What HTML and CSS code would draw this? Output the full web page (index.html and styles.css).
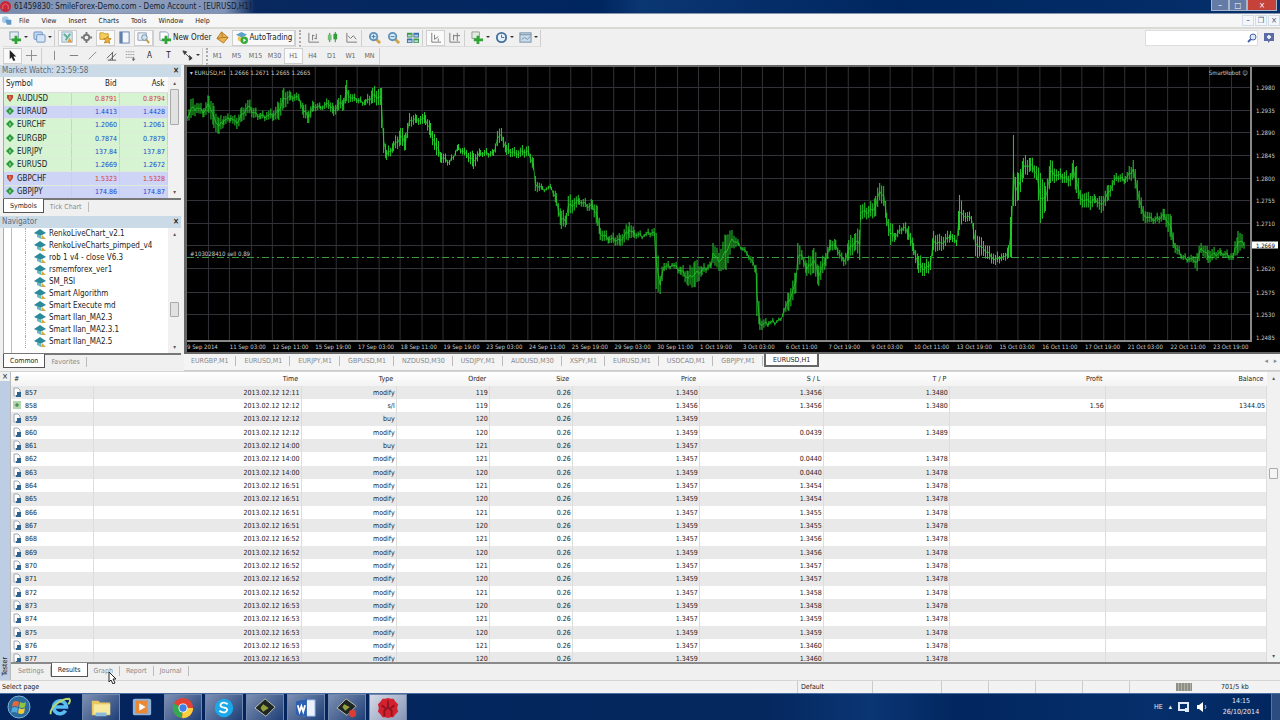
FILE: index.html
```html
<!DOCTYPE html>
<html lang="en">
<head>
    <meta charset="UTF-8">
    <meta name="viewport" content="width=device-width, initial-scale=1.0">
    <title>SmileForex - Demo Account</title>
    <link rel="stylesheet" href="styles.css">
</head>

<body>
    <svg class="sprite" aria-hidden="true">
        <symbol id="i-newchart" viewBox="0 0 14 14"><rect x="1" y="1" width="9" height="8" fill="#e4edf5" stroke="#7d98ae"/><path d="M6 5h3v3h4v3H9v3H6v-3H3V8h3z" fill="#2fa336"/></symbol>
        <symbol id="i-profiles" viewBox="0 0 14 14"><rect x="1" y="1" width="9" height="8" rx="1" fill="#bcd4ee" stroke="#6b93bf"/><rect x="4" y="4" width="9" height="8" rx="1" fill="#d5e5f6" stroke="#6b93bf"/></symbol>
        <symbol id="i-watch" viewBox="0 0 14 14"><rect x="1" y="1" width="11" height="11" fill="#d9e8f2" stroke="#93adbf"/><path d="M3 3l4 4M5 10l5-7" stroke="#5fae92" stroke-width="2"/><path d="M9 7l3 5H7z" fill="#e79a3b"/></symbol>
        <symbol id="i-data" viewBox="0 0 14 14"><circle cx="7" cy="7" r="3" fill="none" stroke="#777" stroke-width="2"/><path d="M7 1v3M7 10v3M1 7h3M10 7h3" stroke="#777" stroke-width="2"/></symbol>
        <symbol id="i-nav" viewBox="0 0 14 14"><path d="M1 2h4l1 1h4v6H1z" fill="#f5cf5e" stroke="#c79a2a"/><path d="M9 6l1 2 3 .3-2 2 .5 3L9 12l-3 1 1-3-2-2 3-.2z" fill="#efb13b" stroke="#bd8623"/></symbol>
        <symbol id="i-terminal" viewBox="0 0 14 14"><rect x="2" y="1" width="10" height="12" fill="#f3f7fc" stroke="#6280ae"/><path d="M2 1h3v12H2z" fill="#6280ae"/></symbol>
        <symbol id="i-tester" viewBox="0 0 14 14"><path d="M1 2h9v8H1z" fill="#e8eef4" stroke="#8fa2b5"/><circle cx="8" cy="7" r="3" fill="#cfe2f3" stroke="#6f8ca6"/><path d="M10 9l3 4" stroke="#c49b46" stroke-width="2"/></symbol>
        <symbol id="i-order" viewBox="0 0 14 14"><path d="M1 1h7l2 2v7H1z" fill="#fff" stroke="#8b9eb1"/><path d="M6 5h3v3h4v3H9v3H6v-3H3V8h3z" fill="#2fa336"/></symbol>
        <symbol id="i-editor" viewBox="0 0 14 14"><path d="M6 1l7 6-5 6-7-5z" fill="#eab24d" stroke="#b0792a"/><path d="M6 1l1 6 6 0M7 7l-6 1" fill="none" stroke="#b0792a"/></symbol>
        <symbol id="i-auto" viewBox="0 0 14 14"><path d="M1 4l6-3 6 3-6 3z" fill="#5ea0c8"/><path d="M3 6v4l4 2V7z" fill="#efc35b"/><circle cx="10" cy="10" r="4" fill="#35ab3c"/><path d="M9 8l3 2-3 2z" fill="#fff"/></symbol>
        <symbol id="i-bars" viewBox="0 0 14 14"><path d="M2 2v10h11M6 4v6M6 5h2M10 3v6M8 8h2" fill="none" stroke="#777"/></symbol>
        <symbol id="i-candles" viewBox="0 0 14 14"><path d="M4 2v10M10 1v11" stroke="#3d7a42"/><rect x="2" y="4" width="4" height="6" fill="#74bd78"/><rect x="8" y="3" width="4" height="6" fill="#2f9e38"/></symbol>
        <symbol id="i-line" viewBox="0 0 14 14"><path d="M2 2v10h11M3 5l3 3 3-3 3 4" fill="none" stroke="#777"/></symbol>
        <symbol id="i-zoomin" viewBox="0 0 14 14"><path d="M8 8l5 5" stroke="#d0a24a" stroke-width="3"/><circle cx="6" cy="6" r="4" fill="#d5e9f7" stroke="#5f93bb" stroke-width="2"/><path d="M4 6h4M6 4v4" stroke="#40759e"/></symbol>
        <symbol id="i-zoomout" viewBox="0 0 14 14"><path d="M8 8l5 5" stroke="#d0a24a" stroke-width="3"/><circle cx="6" cy="6" r="4" fill="#d5e9f7" stroke="#5f93bb" stroke-width="2"/><path d="M4 6h4" stroke="#40759e"/></symbol>
        <symbol id="i-tile" viewBox="0 0 14 14"><path d="M1 2h6v5H1zM8 8h6v5H8z" fill="#3f9c49"/><path d="M8 2h6v5H8zM1 8h6v5H1z" fill="#3d6fae"/><path d="M2 4h4v2H2zM9 4h4v2H9zM2 10h4v2H2zM9 10h4v2H9z" fill="#b9d5df"/></symbol>
        <symbol id="i-scroll" viewBox="0 0 14 14"><path d="M3 2v10h10M6 4v5M6 9l4-3M10 8v3" fill="none" stroke="#777"/></symbol>
        <symbol id="i-shift" viewBox="0 0 14 14"><path d="M2 2v10h11M6 4v6M10 2v9M6 5h7" fill="none" stroke="#777"/></symbol>
        <symbol id="i-indicators" viewBox="0 0 14 14"><path d="M1 1h8v7H1z" fill="#e4ebe4" stroke="#8c9c8c"/><path d="M6 5h3v3h4v3H9v3H6v-3H3V8h3z" fill="#2fa336"/></symbol>
        <symbol id="i-clock" viewBox="0 0 14 14"><circle cx="7" cy="7" r="5" fill="#e6f1fa" stroke="#44719c" stroke-width="2"/><path d="M7 4v3h3" fill="none" stroke="#44719c"/></symbol>
        <symbol id="i-template" viewBox="0 0 14 14"><rect x="1" y="2" width="12" height="10" fill="#c9dbea" stroke="#728ca3"/><path d="M1 4h12" stroke="#728ca3"/><path d="M3 9l3-2 3 2 3-3" fill="none" stroke="#728ca3"/></symbol>
        <symbol id="i-cursor" viewBox="0 0 14 14"><path d="M4 1v10l2-2 2 4 2-1-2-4h3z" fill="#222"/></symbol>
        <symbol id="i-cross" viewBox="0 0 14 14"><path d="M7 1v12M1 7h12" stroke="#888"/></symbol>
        <symbol id="i-vline" viewBox="0 0 14 14"><path d="M7 2v10" stroke="#888"/></symbol>
        <symbol id="i-hline" viewBox="0 0 14 14"><path d="M3 7h9" stroke="#777"/></symbol>
        <symbol id="i-trend" viewBox="0 0 14 14"><path d="M3 11l8-8" stroke="#888"/></symbol>
        <symbol id="i-channel" viewBox="0 0 14 14"><path d="M2 10l7-7M5 12l7-7M3 12h9M8 4v8" fill="none" stroke="#555"/></symbol>
        <symbol id="i-fibo" viewBox="0 0 14 14"><path d="M2 3h9M2 6h9M2 9h9" stroke="#777" stroke-dasharray="1 1"/><path d="M10 9v4M9 11h3" stroke="#555"/></symbol>
        <symbol id="i-arrows" viewBox="0 0 14 14"><path d="M2 2l4 1-2 3zM5 5l4 4M9 7l3 3-3 2z" fill="#333" stroke="#444"/></symbol>
        <symbol id="i-up" viewBox="0 0 8 8"><path d="M4 0l4 4-4 4-4-4z" fill="#2c9a3c"/><path d="M4 3v3M3 4h2" stroke="#8ed394"/></symbol>
        <symbol id="i-down" viewBox="0 0 8 8"><path d="M1 1h6v3L4 8 1 4z" fill="#bf4a2e"/><path d="M4 2v3" stroke="#e79a7c"/></symbol>
        <symbol id="i-expert" viewBox="0 0 12 10"><path d="M0 4l6-4 6 4-6 3z" fill="#2b8b9d"/><path d="M3 5l4 2v3L3 8z" fill="#67b9c0"/><path d="M8 6l4 4H7z" fill="#d8a83c"/></symbol>
        <symbol id="i-doc" viewBox="0 0 8 10"><path d="M1 1h4l2 2v6H1z" fill="#fff" stroke="#9aa7b3"/><path d="M4 5h4v5H3V8h1z" fill="#2f6390"/></symbol>
        <symbol id="i-exit" viewBox="0 0 8 10"><rect x="0" y="1" width="8" height="8" fill="#b2d6ae"/><path d="M2 5h4M4 3v4" stroke="#34773a"/></symbol>
    </svg>

    <header class="titlebar">
        <svg class="app-logo" viewBox="0 0 12 12"><circle cx="6" cy="6" r="6" fill="#c8283a"/><path d="M3 9V5l3-2 3 2v4" fill="none" stroke="#e4737c"/></svg>
        <h1>61459830: SmileForex-Demo.com - Demo Account - [EURUSD,H1]</h1>
        <div class="window-buttons">
            <button aria-label="Minimize">&#8211;</button>
            <button aria-label="Maximize">&#9633;</button>
            <button class="close" aria-label="Close">&#215;</button>
        </div>
    </header>

    <nav class="menubar">
        <svg class="menu-logo" viewBox="0 0 14 12"><circle cx="5" cy="5" r="4" fill="#a9cbea"/><path d="M5 5h7v6H7z" fill="#5f97c9"/></svg>
        <button>File</button>
        <button>View</button>
        <button>Insert</button>
        <button>Charts</button>
        <button>Tools</button>
        <button>Window</button>
        <button>Help</button>
        <div class="mdi-buttons">
            <button aria-label="Minimize chart">&#8211;</button>
            <button aria-label="Restore chart">&#10064;</button>
            <button aria-label="Close chart">&#215;</button>
        </div>
    </nav>

    <div class="toolbar">
        <div class="tool-group">
            <button class="drop" aria-label="New chart"><svg><use href="#i-newchart"/></svg></button>
            <button class="drop" aria-label="Profiles"><svg><use href="#i-profiles"/></svg></button>
        </div>
        <div class="tool-group">
            <button class="on" aria-label="Market Watch"><svg><use href="#i-watch"/></svg></button>
            <button aria-label="Data Window"><svg><use href="#i-data"/></svg></button>
            <button class="on" aria-label="Navigator"><svg><use href="#i-nav"/></svg></button>
            <button aria-label="Terminal"><svg><use href="#i-terminal"/></svg></button>
            <button class="on" aria-label="Strategy Tester"><svg><use href="#i-tester"/></svg></button>
        </div>
        <div class="tool-group">
            <button class="wide"><svg><use href="#i-order"/></svg>New Order</button>
            <button aria-label="MetaEditor"><svg><use href="#i-editor"/></svg></button>
            <button class="wide on"><svg><use href="#i-auto"/></svg>AutoTrading</button>
        </div>
        <div class="tool-group handle">
            <button aria-label="Bar chart"><svg><use href="#i-bars"/></svg></button>
            <button aria-label="Candlesticks"><svg><use href="#i-candles"/></svg></button>
            <button aria-label="Line chart"><svg><use href="#i-line"/></svg></button>
        </div>
        <div class="tool-group">
            <button aria-label="Zoom in"><svg><use href="#i-zoomin"/></svg></button>
            <button aria-label="Zoom out"><svg><use href="#i-zoomout"/></svg></button>
            <button aria-label="Tile windows"><svg><use href="#i-tile"/></svg></button>
        </div>
        <div class="tool-group">
            <button class="on" aria-label="Auto scroll"><svg><use href="#i-scroll"/></svg></button>
            <button aria-label="Chart shift"><svg><use href="#i-shift"/></svg></button>
        </div>
        <div class="tool-group">
            <button class="drop" aria-label="Indicators"><svg><use href="#i-indicators"/></svg></button>
            <button class="drop" aria-label="Periods"><svg><use href="#i-clock"/></svg></button>
            <button class="drop" aria-label="Templates"><svg><use href="#i-template"/></svg></button>
        </div>
        <div class="search">
            <input type="text" aria-label="Search">
            <svg class="search-icon" viewBox="0 0 10 10"><circle cx="6" cy="4" r="3" fill="#dbe6f7" stroke="#4a62a8"/><path d="M4 6L1 9" stroke="#4a62a8" stroke-width="2"/></svg>
            <button aria-label="Chat"><svg viewBox="0 0 12 12"><path d="M1 1h10v8H7l-2 2V9H1z" fill="#5a6ba6"/><path d="M4 5h4M6 3v4" stroke="#e6ebf8" stroke-width="2"/></svg></button>
        </div>
    </div>

    <div class="toolbar lines">
        <div class="tool-group">
            <button class="on" aria-label="Cursor"><svg><use href="#i-cursor"/></svg></button>
            <button aria-label="Crosshair"><svg><use href="#i-cross"/></svg></button>
        </div>
        <div class="tool-group">
            <button aria-label="Vertical line"><svg><use href="#i-vline"/></svg></button>
            <button aria-label="Horizontal line"><svg><use href="#i-hline"/></svg></button>
            <button aria-label="Trendline"><svg><use href="#i-trend"/></svg></button>
            <button aria-label="Channel"><svg><use href="#i-channel"/></svg></button>
            <button aria-label="Fibonacci"><svg><use href="#i-fibo"/></svg></button>
            <button>A</button>
            <button>T</button>
            <button class="drop" aria-label="Arrows"><svg><use href="#i-arrows"/></svg></button>
        </div>
        <div class="tool-group handle periods">
            <button>M1</button>
            <button>M5</button>
            <button>M15</button>
            <button>M30</button>
            <button class="on">H1</button>
            <button>H4</button>
            <button>D1</button>
            <button>W1</button>
            <button>MN</button>
        </div>
    </div>

    <main class="workspace">
        <aside class="dock">
            <section class="panel watch">
                <h2>Market Watch: 23:59:58 <button aria-label="Close Market Watch">&#215;</button></h2>
                <div class="panel-body">
                    <table class="quotes">
                        <colgroup><col><col class="price"><col class="price"></colgroup>
                        <thead><tr><th>Symbol</th><th>Bid</th><th>Ask</th></tr></thead>
                        <tbody id="quotes"></tbody>
                    </table>
                    <div class="scrollbar"><span>&#9652;</span><i class="thumb tall"></i><span>&#9662;</span></div>
                </div>
                <div class="tabs"><button class="active">Symbols</button><button>Tick Chart</button></div>
            </section>
            <section class="panel navigator">
                <h2>Navigator <button aria-label="Close Navigator">&#215;</button></h2>
                <div class="panel-body">
                    <ul id="experts"></ul>
                    <div class="scrollbar low"><span>&#9652;</span><i class="thumb"></i><span>&#9662;</span></div>
                </div>
                <div class="tabs"><button class="active">Common</button><button>Favorites</button></div>
            </section>
        </aside>

        <section class="chart-area">
            <div class="chart">
                <div class="plot">
                    <svg id="plot" viewBox="0 0 1065 273" preserveAspectRatio="none"></svg>
                    <span class="chart-info">&#9662; EURUSD,H1&nbsp; 1.2666 1.2671 1.2665 1.2665</span>
                    <span class="chart-expert">SmartRobot &#9786;</span>
                    <span class="order-label">#103028410 sell 0.89</span>
                </div>
                <div class="price-axis" id="prices"></div>
                <div class="date-axis" id="dates"></div>
            </div>
            <div class="chart-tabs">
                <button>EURGBP,M1</button>
                <button>EURUSD,M1</button>
                <button>EURJPY,M1</button>
                <button>GBPUSD,M1</button>
                <button>NZDUSD,M30</button>
                <button>USDJPY,M1</button>
                <button>AUDUSD,M30</button>
                <button>XSPY,M1</button>
                <button>EURUSD,M1</button>
                <button>USDCAD,M1</button>
                <button>GBPJPY,M1</button>
                <button class="active">EURUSD,H1</button>
                <span class="tab-arrows">&#9666; &nbsp; &#9656;</span>
            </div>
        </section>
    </main>

    <section class="tester">
        <div class="tester-side"><button aria-label="Close Tester">&#215;</button><span>Tester</span></div>
        <div class="tester-main">
            <div class="results-wrap">
                <table class="results">
                    <colgroup>
                        <col class="c-num"><col class="c-time"><col class="c-type"><col class="c-order"><col class="c-size">
                        <col class="c-price"><col class="c-sl"><col class="c-tp"><col class="c-profit"><col class="c-balance">
                    </colgroup>
                    <thead>
                        <tr><th>#</th><th>Time</th><th>Type</th><th>Order</th><th>Size</th><th>Price</th><th>S / L</th><th>T / P</th><th>Profit</th><th>Balance</th></tr>
                    </thead>
                    <tbody id="results"></tbody>
                </table>
                <div class="scrollbar mid"><span>&#9652;</span><i class="thumb short"></i><span>&#9662;</span></div>
            </div>
            <div class="tabs">
                <button>Settings</button>
                <button class="active">Results</button>
                <button class="hovered">Graph<svg class="pointer" viewBox="0 0 8 12"><path d="M1 0v10l2-2 2 4 2-1-2-4h3z" fill="#fff" stroke="#222"/></svg></button>
                <button>Report</button>
                <button>Journal</button>
            </div>
        </div>
    </section>

    <footer class="statusbar">
        <span class="hint">Select page</span>
        <span class="profile">Default</span>
        <span class="cell wide"></span>
        <span class="cell"></span>
        <span class="cell"></span>
        <span class="cell"></span>
        <span class="cell"></span>
        <span class="traffic"><i></i>701/5 kb</span>
    </footer>

    <div class="taskbar">
        <button class="start" aria-label="Start"><svg viewBox="0 0 24 24"><circle cx="12" cy="12" r="11" fill="#2b6c9e" stroke="#7fb2d3"/><path d="M6 7q3-2 6 0l-1 5q-3-2-6 0z" fill="#e5673a"/><path d="M13 7q3 2 6 0l-1 5q-3 2-6 0z" fill="#8fc441"/><path d="M5 13q3-2 6 0l-1 5q-3-2-6 0z" fill="#4fa8dc"/><path d="M12 13q3 2 6 0l-1 5q-3 2-6 0z" fill="#f5c83a"/></svg></button>
        <button aria-label="Internet Explorer"><svg viewBox="0 0 24 24"><path d="M18 16a7 7 0 1 1 1-4H7" fill="none" stroke="#58bdf0" stroke-width="4"/><path d="M2 20C0 14 12 3 22 3c2 2 0 5-1 6" fill="none" stroke="#b9d66b" stroke-width="2"/></svg></button>
        <button class="running" aria-label="Explorer"><svg viewBox="0 0 24 24"><path d="M2 4h7l2 2h11v14H2z" fill="#e9c860"/><path d="M4 8h18v11H4z" fill="#f8e9a0"/><path d="M6 17h12v4H6z" fill="#88bcdc"/></svg></button>
        <button aria-label="Media Player"><svg viewBox="0 0 24 24"><rect x="2" y="3" width="20" height="18" rx="2" fill="#8fb1d8"/><rect x="5" y="5" width="13" height="14" fill="#e98936"/><path d="M9 8l7 4-7 4z" fill="#fff"/></svg></button>
        <button class="running" aria-label="Chrome"><svg viewBox="0 0 24 24"><circle cx="12" cy="12" r="11" fill="#e34133"/><path d="M12 12L2 7a11 11 0 0 0 9 16z" fill="#35a852"/><path d="M12 12h11a11 11 0 0 1-12 11z" fill="#fbd03b"/><circle cx="12" cy="12" r="5" fill="#fff"/><circle cx="12" cy="12" r="4" fill="#3f7fe8"/></svg></button>
        <button class="running" aria-label="Skype"><svg viewBox="0 0 24 24"><circle cx="12" cy="12" r="10" fill="#1ba8e8"/><path d="M16 8q-4-3-7-1-2 3 1 4l4 1q3 2 0 4-3 2-7-1" fill="none" stroke="#fff" stroke-width="2"/></svg></button>
        <button class="running" aria-label="Camtasia"><svg viewBox="0 0 24 24"><path d="M12 2l11 9-10 10L1 12z" fill="#1f2623" stroke="#c2c8b2"/><path d="M10 8l6 4-6 4-3-4z" fill="#91a13c"/></svg></button>
        <button class="running" aria-label="Word"><svg viewBox="0 0 24 24"><path d="M9 3h13v18H9z" fill="#eaf1fb" stroke="#6d98d4"/><path d="M1 5l12-3v20L1 19z" fill="#2c5fb0"/><path d="M3 9l2 7 2-6 2 6 2-7" fill="none" stroke="#fff" stroke-width="2"/></svg></button>
        <button class="running" aria-label="Recorder"><svg viewBox="0 0 24 24"><path d="M11 2l11 8-10 10L1 12z" fill="#1f2623" stroke="#c2c8b2"/><path d="M9 8l6 3-5 4-3-4z" fill="#91a13c"/><circle cx="18" cy="18" r="4" fill="#dd3b34"/></svg></button>
        <button class="running current" aria-label="MetaTrader"><svg viewBox="0 0 24 24"><path d="M12 1l3 1 3 0 2 3 3 3-1 4 1 4-3 3-2 3-3 0-3 1-3-1-3 0-2-3-3-3 1-4-1-4 3-3 2-3 3 0z" fill="#d3212f"/><path d="M12 4v8M8 21v-6l4-4 4 4v6M5 9l4 3M19 9l-4 3" fill="none" stroke="#8d1420" stroke-width="2"/></svg></button>
        <div class="tray">
            <span>HE</span>
            <span class="tray-up">&#9652;</span>
            <svg viewBox="0 0 12 12"><rect x="1" y="2" width="9" height="7" fill="none" stroke="#dfe8f5" stroke-width="2"/><path d="M7 7h4v4H7z" fill="#dfe8f5"/></svg>
            <svg viewBox="0 0 12 12"><path d="M1 4h2l4-3v10L3 8H1z" fill="#fff"/><path d="M9 4q2 2 0 4" fill="none" stroke="#b7c5de"/></svg>
            <time>14:15<br>26/10/2014</time>
        </div>
        <button class="show-desktop" aria-label="Show desktop"></button>
    </div>

    <script src="script.js"></script>
</body>
</html>
```
FILE: styles.css
```css
* {
    box-sizing: border-box;
}

body {
    display: flex;
    flex-direction: column;
    height: 100vh;
    margin: 0;
    overflow: hidden;
    background-color: #f0f0f0;
    color: #222;
    font-family: "DejaVu Sans Condensed", "DejaVu Sans", sans-serif;
    font-size: 8px;
    line-height: 12px;
}

button {
    margin: 0;
    padding: 0;
    border: 0;
    background: none;
    color: inherit;
    font: inherit;
}

h1,
h2 {
    margin: 0;
    font-size: 8px;
    font-weight: normal;
}

.sprite {
    display: none;
}

/* title and menu */

.titlebar {
    display: flex;
    flex: none;
    align-items: center;
    height: 14px;
    background: linear-gradient(90deg, #7688ab 0, #93a3c0 100px, #8092b5 225px, #08285f 255px, #00265f 600px, #0a3672 640px, #00265f 900px, #05306b 100%);
    border-bottom: 1px solid #8593ad;
}

.titlebar h1 {
    margin-left: 3px;
    color: #141c2c;
}

.app-logo {
    width: 11px;
    height: 11px;
}

.window-buttons {
    display: flex;
    align-self: flex-start;
    margin-left: auto;
    margin-right: 3px;
}

.window-buttons button {
    width: 18px;
    height: 11px;
    border: 1px solid #a9b6cc;
    border-top: 0;
    background-color: #647ba5;
    color: #fff;
    line-height: 9px;
}

.window-buttons .close {
    width: 30px;
    background-color: #c4423a;
}

.menubar {
    display: flex;
    flex: none;
    align-items: center;
    height: 15px;
    background-color: #f6f6f6;
    border-bottom: 2px solid #d9d9d5;
}

.menubar > button {
    padding: 0 6px;
    font-size: 7px;
}

.menu-logo {
    width: 12px;
    height: 11px;
    margin: 0 0 0 1px;
}

.mdi-buttons {
    display: flex;
    gap: 1px;
    margin-left: auto;
}

.mdi-buttons button {
    width: 12px;
    height: 11px;
    border: 1px solid #d3dbe6;
    background-color: #f3f7fc;
    color: #44587c;
    line-height: 9px;
}

/* toolbars */

.toolbar {
    display: flex;
    flex: none;
    align-items: center;
    height: 18px;
    padding-left: 3px;
}

.tool-group {
    display: flex;
    align-items: center;
    height: 17px;
    padding-left: 3px;
    border-right: 1px solid #cfcfcf;
    border-bottom: 1px solid #ddd;
}

.tool-group button {
    display: flex;
    align-items: center;
    justify-content: center;
    width: 19px;
    height: 16px;
}

.tool-group svg {
    flex: none;
    width: 13px;
    height: 13px;
}

.tool-group .on {
    border: 1px solid #cfcfcf;
    background-color: #fafafa;
}

.tool-group .drop {
    width: 24px;
    gap: 2px;
}

.tool-group .drop::after {
    border: 2px solid transparent;
    border-top-color: #333;
    content: "";
}

.tool-group .wide {
    width: auto;
    gap: 1px;
    padding: 0 2px;
}

.handle {
    margin-left: 3px;
    border-left: 2px dotted #aaa;
}

.lines .tool-group:first-child,
.lines .periods {
    padding-left: 0;
}

.periods {
    color: #666;
    font-size: 7px;
}

.search {
    display: flex;
    align-items: center;
    position: relative;
    margin-left: auto;
}

.search input {
    width: 113px;
    height: 16px;
    padding: 0 18px 0 4px;
    border: 1px solid #ddd;
    background-color: #fff;
    font: inherit;
}

.search-icon {
    position: absolute;
    top: 3px;
    left: 102px;
    width: 10px;
    height: 10px;
}

.search button {
    width: 22px;
    height: 12px;
}

.search button svg {
    width: 12px;
    height: 12px;
}

/* left dock */

.workspace {
    display: flex;
    flex: none;
    gap: 3px;
}

.dock {
    display: flex;
    flex: none;
    flex-direction: column;
    width: 181px;
}

.panel {
    display: flex;
    flex-direction: column;
}

.watch {
    height: 151px;
}

.navigator {
    flex: 1;
    min-height: 0;
}

.panel h2 {
    display: flex;
    flex: none;
    justify-content: space-between;
    height: 12px;
    padding: 0 2px;
    background-color: #cbdae7;
    color: #5d6c7c;
}

.panel h2 button {
    color: #222;
    font-weight: bold;
}

.panel-body {
    display: flex;
    flex: 1;
    min-height: 0;
    margin-left: 3px;
    overflow: hidden;
    border-bottom: 2px solid #777;
    border-left: 1px solid #aaa;
    background-color: #fff;
}

.quotes {
    flex: 1;
    height: 122px;
    border-collapse: collapse;
    table-layout: fixed;
}

.price {
    width: 48px;
}

.quotes th {
    height: 15px;
    padding: 0 3px;
    border-bottom: 1px solid #ddd;
    background-color: #fafafa;
    font-weight: normal;
    text-align: right;
}

.quotes th:first-child {
    padding: 0 2px;
    text-align: left;
}

.quotes td {
    height: 13px;
    padding: 0 2px;
    border-right: 1px solid #c8d6c8;
    border-bottom: 1px solid #dcebdc;
    background-color: #d6f3d2;
    color: #1c3fd0;
    font-size: 7px;
    line-height: 12px;
    text-align: right;
}

.quotes td:first-child {
    color: #222;
    font-size: 8px;
    text-align: left;
}

.quotes svg {
    width: 8px;
    height: 8px;
    margin-right: 3px;
    vertical-align: -1px;
}

.quotes .blue td {
    background-color: #cdd4f5;
}

.quotes .down td + td {
    color: #d8382e;
}

.scrollbar {
    display: flex;
    flex: none;
    flex-direction: column;
    align-items: center;
    width: 13px;
    background-color: #f1f1f1;
    color: #555;
    font-size: 6px;
}

.scrollbar span:last-child {
    margin-top: auto;
}

.thumb {
    width: 9px;
    height: 15px;
    border: 1px solid #aaa;
    border-radius: 1px;
    background-color: #e2e2e2;
}

.tall {
    height: 36px;
}

.low .thumb {
    margin-top: 62px;
}

.tabs {
    display: flex;
    flex: none;
    height: 16px;
    padding-left: 3px;
    color: #8a8a8a;
    font-size: 7px;
}

.tabs button {
    height: 10px;
    margin-top: 2px;
    padding: 0 6px;
    border-right: 1px solid #bbb;
    line-height: 10px;
}

.tabs .active {
    height: 14px;
    margin-top: -1px;
    border: 1px solid #555;
    border-top: 0;
    background-color: #fff;
    color: #222;
    line-height: 14px;
}

#experts {
    flex: 1;
    margin: 0 0 0 7px;
    padding: 0 0 0 13px;
    border-left: 1px solid #bbb;
    list-style: none;
}

#experts li {
    display: flex;
    align-items: center;
    gap: 3px;
    height: 12px;
    border-left: 1px dotted #aaa;
    white-space: nowrap;
}

#experts svg {
    width: 12px;
    height: 10px;
    margin-left: 8px;
}

/* chart */

.chart-area {
    display: flex;
    flex: 1;
    flex-direction: column;
    min-width: 0;
}

.chart {
    display: grid;
    grid-template-columns: 1fr 28px;
    grid-template-rows: 275px 10px;
    border: solid #666;
    border-width: 2px 0 2px 3px;
    background-color: #000;
    color: #ccc;
    font-size: 6px;
    line-height: 9px;
}

.plot {
    position: relative;
    min-width: 0;
    border-right: 2px solid #888;
    border-bottom: 2px solid #888;
}

.plot svg {
    display: block;
    width: 100%;
    height: 100%;
}

.plot path {
    fill: none;
    vector-effect: non-scaling-stroke;
}

.grid-lines {
    stroke: #323238;
}

.plot .order-line {
    stroke: #3a9c40;
    stroke-dasharray: 7 3 2 3;
}

.plot .bars {
    stroke: #25d02c;
}

.plot .closes {
    stroke: #1b9a20;
}

.chart-info,
.chart-expert,
.order-label {
    position: absolute;
    top: 1px;
    left: 3px;
}

.chart-expert {
    right: 2px;
    left: auto;
}

.order-label {
    top: 182px;
}

.price-axis {
    position: relative;
}

.price-axis span {
    position: absolute;
    right: 2px;
    left: 0;
    padding-left: 4px;
    transform: translateY(-50%);
}

.price-axis .last {
    background-color: #fff;
    color: #000;
    line-height: 7px;
}

.date-axis {
    display: grid;
    grid-column: 1 / 3;
    grid-template-columns: repeat(25, 1fr);
    padding-right: 24px;
    white-space: nowrap;
}

.chart-tabs {
    display: flex;
    gap: 1px;
    height: 17px;
    border-bottom: 1px solid #ccc;
    background-color: #f4f4f4;
    color: #888;
    font-size: 7px;
}

.chart-tabs button {
    height: 10px;
    margin-top: 2px;
    padding: 0 7px;
    border-right: 1px solid #bbb;
    line-height: 10px;
}

.chart-tabs .active {
    height: 13px;
    margin-top: 0;
    border: 2px solid #666;
    border-top: 0;
    background-color: #fff;
    color: #222;
    line-height: 12px;
}

.tab-arrows {
    margin-left: auto;
    padding: 0 3px;
    line-height: 14px;
}

/* strategy tester */

.tester {
    display: flex;
    flex: 1;
    min-height: 0;
    border-top: 1px solid #d5d5d5;
}

.tester-side {
    display: flex;
    flex-direction: column;
    justify-content: space-between;
    align-items: center;
    width: 10px;
    padding-bottom: 4px;
    background-color: #bccde4;
}

.tester-side button {
    width: 10px;
    height: 9px;
    background-color: #f0f0f0;
    line-height: 9px;
}

.tester-side span {
    font-size: 7px;
    line-height: 9px;
    writing-mode: vertical-rl;
    transform: rotate(180deg);
}

.tester-main {
    display: flex;
    flex: 1;
    flex-direction: column;
    min-width: 0;
    border-left: 1px solid #bbb;
}

.results-wrap {
    display: flex;
    flex: 1;
    min-height: 0;
    overflow: hidden;
    border-bottom: 2px solid #8a8a8a;
    background-color: #fff;
}

.results {
    flex: 1;
    align-self: flex-start;
    border-collapse: collapse;
    table-layout: fixed;
    font-size: 7px;
}

.c-num { width: 82px; }
.c-time { width: 208px; }
.c-type { width: 95px; }
.c-order { width: 93px; }
.c-size { width: 83px; }
.c-price { width: 127px; }
.c-sl { width: 124px; }
.c-tp { width: 126px; }
.c-profit { width: 156px; }
.c-balance { width: 161px; }

.results th {
    height: 14px;
    padding: 0 3px;
    background: linear-gradient(#fff, #f3f3f3);
    font-weight: normal;
    text-align: right;
}

.results td {
    height: 13px;
    padding: 0 1px;
    border-right: 1px solid #ddd;
    line-height: 12px;
    text-align: right;
}

.results tr:nth-child(3n) td {
    height: 14px;
}

.results tbody tr:nth-child(odd) {
    background-color: #e9e9e9;
}

.results th:first-child,
.results td:first-child {
    text-align: left;
}

.results td:first-child {
    padding-left: 2px;
}

.results svg {
    width: 8px;
    height: 10px;
    margin-right: 4px;
    vertical-align: -2px;
}

.mid .short {
    height: 11px;
    margin-top: 84px;
    background-color: #f5f5f5;
}

.tester .tabs {
    padding-left: 1px;
}

.hovered {
    position: relative;
}

.pointer {
    position: absolute;
    top: 6px;
    left: 20px;
    width: 8px;
    height: 12px;
}

/* status bar */

.statusbar {
    display: flex;
    flex: none;
    height: 13px;
    border-top: 1px solid #d5d5d5;
    background-color: #f2f2f2;
    font-size: 7px;
    line-height: 12px;
}

.hint {
    flex: 1;
    padding-left: 2px;
}

.profile {
    width: 75px;
    padding-left: 3px;
    border-left: 1px solid #ccc;
}

.cell {
    width: 47px;
    border-left: 1px solid #ccc;
}

.cell.wide {
    width: 69px;
}

.traffic {
    display: flex;
    align-items: center;
    gap: 29px;
    width: 151px;
    padding-left: 46px;
    border-left: 1px solid #ccc;
}

.traffic i {
    width: 16px;
    height: 8px;
    background: repeating-linear-gradient(90deg, #8f8f87 0 2px, #b2b2aa 2px 3px);
}

/* taskbar */

.taskbar {
    display: flex;
    flex: none;
    gap: 3px;
    height: 27px;
    background: linear-gradient(90deg, #02235b, #05285f 60%, #0a3674 68%, #02265f 75%, #06306b 90%, #02265f);
    border-top: 1px solid #4a6ea3;
}

.taskbar > button {
    width: 38px;
    text-align: center;
}

.taskbar > button svg {
    width: 22px;
    height: 22px;
    margin-top: 2px;
}

.taskbar .start svg {
    width: 26px;
    height: 24px;
    margin-top: 1px;
}

.taskbar .running {
    border: 1px solid #7186ad;
    border-bottom: 0;
    background: linear-gradient(135deg, #7e90b3, #1f3f77);
}

.taskbar .current {
    background: linear-gradient(135deg, #d5dae6, #8696b6);
}

.tray {
    display: flex;
    align-items: center;
    gap: 6px;
    margin-left: auto;
    color: #e8eef8;
    font-size: 7px;
}

.tray svg {
    width: 12px;
    height: 12px;
}

.tray time {
    width: 54px;
    line-height: 11px;
    text-align: center;
}

.taskbar .show-desktop {
    width: 9px;
    border-left: 1px solid #5876a5;
    background-color: #2c4c80;
}
```
FILE: script.js
```js
const icon = (name) => `<svg><use href="#i-${name}"/></svg>`;

// symbol, bid, ask, direction, row colour
const quotes = [
    ['AUDUSD', '0.8791', '0.8794', 'down', ''],
    ['EURAUD', '1.4413', '1.4428', 'up', 'blue'],
    ['EURCHF', '1.2060', '1.2061', 'up', ''],
    ['EURGBP', '0.7874', '0.7879', 'up', ''],
    ['EURJPY', '137.84', '137.87', 'up', ''],
    ['EURUSD', '1.2669', '1.2672', 'up', ''],
    ['GBPCHF', '1.5323', '1.5328', 'down', 'blue'],
    ['GBPJPY', '174.86', '174.87', 'up', 'blue']
];
document.getElementById('quotes').innerHTML = quotes.map(([symbol, bid, ask, dir, color]) =>
    `<tr class="${dir} ${color}"><td>${icon(dir)}${symbol}</td><td>${bid}</td><td>${ask}</td></tr>`).join('');

const experts = ['RenkoLiveChart_v2.1', 'RenkoLiveCharts_pimped_v4', 'rob 1 v4 - close V6.3', 'rsmemforex_ver1', 'SM_RSI',
    'Smart Algorithm', 'Smart Execute md', 'Smart Ilan_MA2.3', 'Smart Ilan_MA2.3.1', 'Smart Ilan_MA2.5'];
document.getElementById('experts').innerHTML = experts.map(name => `<li>${icon('expert')}${name}</li>`).join('');

// time, type, order, price, s/l, t/p, profit, balance
const deals = [
    ['12:11', 'modify', 119, '1.3450', '1.3456', '1.3480', '', ''],
    ['12:12', 's/l', 119, '1.3456', '1.3456', '1.3480', '1.56', '1344.05'],
    ['12:12', 'buy', 120, '1.3459', '', '', '', ''],
    ['12:12', 'modify', 120, '1.3459', '0.0439', '1.3489', '', ''],
    ['14:00', 'buy', 121, '1.3457', '', '', '', ''],
    ['14:00', 'modify', 121, '1.3457', '0.0440', '1.3478', '', ''],
    ['14:00', 'modify', 120, '1.3459', '0.0440', '1.3478', '', ''],
    ['16:51', 'modify', 121, '1.3457', '1.3454', '1.3478', '', ''],
    ['16:51', 'modify', 120, '1.3459', '1.3454', '1.3478', '', ''],
    ['16:51', 'modify', 121, '1.3457', '1.3455', '1.3478', '', ''],
    ['16:51', 'modify', 120, '1.3459', '1.3455', '1.3478', '', ''],
    ['16:52', 'modify', 121, '1.3457', '1.3456', '1.3478', '', ''],
    ['16:52', 'modify', 120, '1.3459', '1.3456', '1.3478', '', ''],
    ['16:52', 'modify', 121, '1.3457', '1.3457', '1.3478', '', ''],
    ['16:52', 'modify', 120, '1.3459', '1.3457', '1.3478', '', ''],
    ['16:52', 'modify', 121, '1.3457', '1.3458', '1.3478', '', ''],
    ['16:53', 'modify', 120, '1.3459', '1.3458', '1.3478', '', ''],
    ['16:53', 'modify', 121, '1.3457', '1.3459', '1.3478', '', ''],
    ['16:53', 'modify', 120, '1.3459', '1.3459', '1.3478', '', ''],
    ['16:53', 'modify', 121, '1.3457', '1.3460', '1.3478', '', ''],
    ['16:53', 'modify', 120, '1.3459', '1.3460', '1.3478', '', '']
];
document.getElementById('results').innerHTML = deals.map(([time, type, order, ...rest], i) => {
    const cells = [`2013.02.12 ${time}`, type, order, '0.26', ...rest];
    return `<tr><td>${icon(type === 's/l' ? 'exit' : 'doc')}${857 + i}</td>` + cells.map(c => `<td>${c}</td>`).join('') + '</tr>';
}).join('');

const dates = ['9 Sep 2014', '11 Sep 03:00', '12 Sep 11:00', '15 Sep 19:00', '17 Sep 03:00', '18 Sep 11:00', '19 Sep 19:00',
    '23 Sep 03:00', '24 Sep 11:00', '25 Sep 19:00', '29 Sep 03:00', '30 Sep 11:00', '1 Oct 19:00', '3 Oct 03:00', '6 Oct 11:00',
    '7 Oct 19:00', '9 Oct 03:00', '10 Oct 11:00', '13 Oct 19:00', '15 Oct 03:00', '16 Oct 11:00', '17 Oct 19:00',
    '21 Oct 03:00', '22 Oct 11:00', '23 Oct 19:00'];
document.getElementById('dates').innerHTML = dates.map(d => `<span>${d}</span>`).join('');

const levels = [20, 43, 65, 88, 111, 133, 156, 178, 201, 225, 247, 270];
const prices = ['1.2980', '1.2935', '1.2890', '1.2845', '1.2800', '1.2755', '1.2710', '1.2669', '1.2620', '1.2575', '1.2530', '1.2485'];
document.getElementById('prices').innerHTML = prices.map((p, i) =>
    `<span class="${i === 7 ? 'last' : ''}" style="top: ${levels[i]}px">${p}</span>`).join('');

// x, high, low
const swings = [
    [0, 49, 54], [4, 32, 51], [10, 36, 46], [17, 41, 50], [22, 29, 46], [27, 39, 61], [32, 51, 67], [37, 49, 58], [44, 48, 54],
    [50, 51, 62], [55, 40, 54], [61, 33, 46], [67, 41, 51], [74, 46, 52], [80, 45, 53], [87, 44, 53], [92, 36, 53], [97, 21, 41],
    [104, 25, 33], [112, 27, 34], [117, 38, 51], [122, 44, 56], [127, 35, 44], [134, 39, 43], [142, 33, 42], [147, 39, 49],
    [152, 31, 43], [157, 31, 43], [160, 13, 34], [164, 27, 35], [170, 31, 36], [179, 32, 38], [186, 21, 36], [194, 21, 38],
    [195, 21, 61], [197, 61, 86], [200, 83, 93], [207, 74, 84], [214, 61, 78], [219, 66, 83], [223, 46, 59], [230, 48, 56],
    [239, 48, 58], [244, 56, 71], [250, 71, 88], [255, 86, 96], [263, 93, 98], [272, 77, 83], [280, 83, 91], [287, 86, 102],
    [294, 83, 89], [307, 83, 89], [311, 64, 79], [315, 61, 74], [320, 78, 88], [330, 83, 91], [342, 79, 89], [347, 91, 103],
    [349, 109, 124], [356, 119, 123], [365, 120, 123], [370, 126, 139], [375, 144, 162], [380, 146, 158], [382, 129, 149],
    [393, 131, 138], [403, 136, 144], [406, 133, 143], [411, 139, 159], [414, 161, 173], [423, 169, 176], [434, 168, 179],
    [443, 155, 171], [448, 163, 171], [458, 167, 170], [468, 161, 169], [470, 166, 222], [474, 209, 227], [478, 196, 204],
    [486, 196, 200], [495, 200, 208], [502, 204, 219], [509, 194, 220], [516, 200, 208], [525, 196, 201], [527, 176, 196],
    [533, 186, 204], [540, 168, 203], [546, 163, 181], [553, 176, 179], [561, 184, 189], [570, 198, 206], [571, 206, 249],
    [574, 251, 263], [583, 254, 258], [595, 251, 254], [598, 241, 246], [603, 226, 244], [610, 206, 226], [612, 176, 203],
    [616, 183, 193], [621, 196, 209], [628, 181, 206], [633, 199, 219], [640, 186, 199], [645, 173, 183], [650, 173, 183],
    [658, 191, 199], [663, 173, 193], [670, 166, 183], [674, 163, 193], [675, 138, 153], [683, 139, 151], [690, 129, 149],
    [694, 116, 133], [698, 119, 139], [701, 146, 159], [705, 156, 178], [710, 166, 173], [718, 156, 164], [723, 159, 173],
    [728, 176, 188], [733, 189, 206], [739, 196, 209], [745, 189, 203], [748, 164, 183], [756, 169, 184], [765, 164, 173],
    [771, 173, 179], [774, 128, 163], [778, 143, 154], [786, 149, 156], [790, 163, 189], [798, 174, 189], [810, 188, 198],
    [818, 186, 193], [823, 178, 191], [826, 139, 191], [828, 68, 139], [830, 110, 139], [833, 106, 133], [838, 91, 111],
    [845, 91, 104], [851, 99, 113], [855, 106, 156], [860, 119, 144], [865, 93, 116], [873, 104, 113], [885, 106, 119],
    [888, 93, 111], [891, 99, 126], [895, 123, 138], [905, 129, 143], [910, 129, 136], [916, 129, 146], [923, 118, 133],
    [931, 106, 114], [940, 109, 116], [948, 93, 111], [952, 113, 133], [958, 139, 154], [968, 151, 157], [979, 142, 153],
    [986, 149, 173], [990, 176, 186], [998, 188, 193], [1008, 189, 196], [1012, 186, 204], [1016, 176, 186], [1023, 183, 196],
    [1036, 183, 189], [1048, 186, 193], [1053, 164, 186], [1061, 176, 179]
];

// hourly bars every two units between the swings
let bars = '';
let closes = '';
for (let i = 0; i < swings.length - 1; i++) {
    const [x1, high1, low1] = swings[i];
    const [x2, high2, low2] = swings[i + 1];
    bars += `M${x1} ${high1}V${low1}`;
    closes += `${i ? 'L' : 'M'}${x1} ${(high1 + low1) / 2}`;
    for (let x = x1 + 2; x < x2; x += 2) {
        const t = (x - x1) / (x2 - x1);
        const wick = (x * 13) % 7 - 3;
        const high = high1 + (high2 - high1) * t + wick;
        const low = Math.max(low1 + (low2 - low1) * t + wick / 2, high + 3);
        bars += `M${x} ${high}V${low}`;
        closes += `L${x} ${(high + low) / 2}`;
    }
}

let grid = levels.slice(0, 11).map(y => `M0 ${y + 0.5}H1065`).join('');
for (let i = 0; i < 49; i++) {
    grid += `M${Math.round(21 + i * 21.35) + 0.5} 0V273`;
}

document.getElementById('plot').innerHTML =
    `<path class="grid-lines" d="${grid}"/><path class="order-line" d="M0 190.5H1065"/>` +
    `<path class="closes" d="${closes}"/><path class="bars" d="${bars}"/>`;
```
